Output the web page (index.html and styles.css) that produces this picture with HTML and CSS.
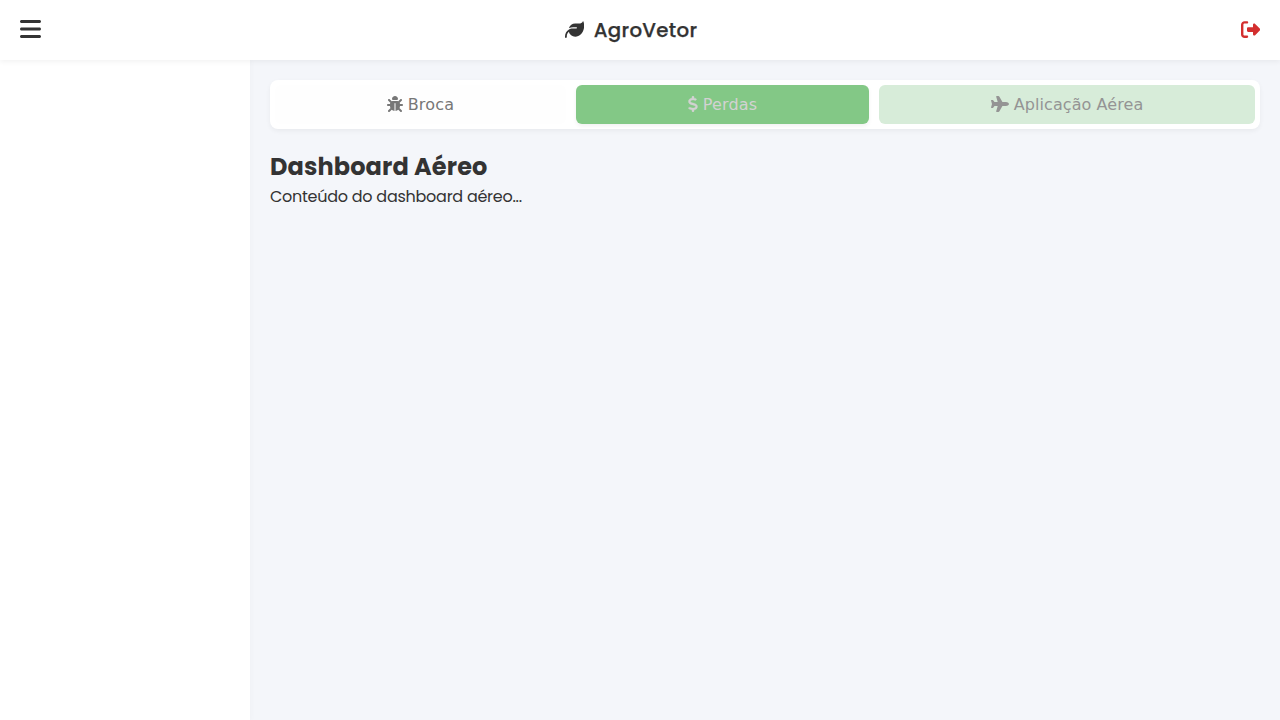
FILE: index.html
```html
<!DOCTYPE html>
<html lang="pt-BR">
<head>
<meta charset="utf-8">
<title>AgroVetor</title>
<link rel="stylesheet" href="styles.css">
</head>
<body>
<header class="header">
  <button class="icon-btn" aria-label="Menu"><svg class="bars" viewBox="0 0 448 512"><path d="M0 96C0 78.3 14.3 64 32 64H416c17.7 0 32 14.3 32 32s-14.3 32-32 32H32C14.3 128 0 113.7 0 96zM0 256c0-17.7 14.3-32 32-32H416c17.7 0 32 14.3 32 32s-14.3 32-32 32H32c-17.7 0-32-14.3-32-32zM448 416c0 17.7-14.3 32-32 32H32c-17.7 0-32-14.3-32-32s14.3-32 32-32H416c17.7 0 32 14.3 32 32z"/></svg></button>
  <div class="brand">
    <svg class="leaf" viewBox="0 0 512 512"><path d="M272 96c-78.6 0-145.1 51.5-167.7 122.5c33.6-17 71.5-26.5 111.7-26.5h88c8.8 0 16 7.2 16 16s-7.2 16-16 16H288 216c-16.6 0-32.7 1.9-48.2 5.4c-25.9 5.9-50 16.4-71.4 30.7C38.3 298.8 0 364.9 0 440v16c0 13.3 10.7 24 24 24s24-10.7 24-24V440c0-48.7 20.7-92.5 53.8-123.2C121.6 392.3 190.3 448 272 448l1 0c132.1-.7 239-130.9 239-291.4c0-42.6-7.5-83.1-21.1-119.6c-2.6-6.9-12.7-6.6-16.2-.1C455.9 72.1 418.7 96 376 96L272 96z"/></svg>
    <span class="brand-name">AgroVetor</span>
  </div>
  <button class="icon-btn logout" aria-label="Sair"><svg class="exit" viewBox="0 0 512 512"><path d="M377.9 105.9L500.7 228.7c7.2 7.2 11.3 17.1 11.3 27.3s-4.1 20.1-11.3 27.3L377.9 406.1c-6.4 6.4-15 9.9-24 9.9c-18.7 0-33.9-15.2-33.9-33.9l0-62.1-128 0c-17.7 0-32-14.3-32-32l0-64c0-17.7 14.3-32 32-32l128 0 0-62.1c0-18.7 15.2-33.9 33.9-33.9c9 0 17.6 3.6 24 9.9zM160 96L96 96c-17.7 0-32 14.3-32 32l0 256c0 17.7 14.3 32 32 32l64 0c17.7 0 32 14.3 32 32s-14.3 32-32 32l-64 0c-53 0-96-43-96-96L0 128C0 75 43 32 96 32l64 0c17.7 0 32 14.3 32 32s-14.3 32-32 32z"/></svg></button>
</header>
<div class="layout">
  <aside class="sidebar"></aside>
  <main class="content">
    <nav class="tabs">
      <button class="tab"><svg class="bug" viewBox="0 0 512 512"><path d="M256 0c53 0 96 43 96 96v3.6c0 15.7-12.7 28.4-28.4 28.4H188.4c-15.7 0-28.4-12.7-28.4-28.4V96c0-53 43-96 96-96zM41.4 105.4c12.5-12.5 32.8-12.5 45.3 0l64 64c.7 .7 1.3 1.4 1.9 2.1c14.2-7.3 30.4-11.4 47.5-11.4H312c17.1 0 33.2 4.1 47.5 11.4c.6-.7 1.2-1.4 1.9-2.1l64-64c12.5-12.5 32.8-12.5 45.3 0s12.5 32.8 0 45.3l-64 64c-.7 .7-1.4 1.3-2.1 1.9c6.2 12 10.1 25.3 11.1 39.5H480c17.7 0 32 14.3 32 32s-14.3 32-32 32H416c0 24.6-5.5 47.8-15.4 68.6c2.2 1.3 4.2 2.9 6 4.8l64 64c12.5 12.5 12.5 32.8 0 45.3s-32.8 12.5-45.3 0l-63.1-63.1c-24.5 21.8-55.8 36.2-90.3 39.6V240c0-8.8-7.2-16-16-16s-16 7.2-16 16V479.2c-34.5-3.4-65.8-17.8-90.3-39.6L86.6 502.6c-12.5 12.5-32.8 12.5-45.3 0s-12.5-32.8 0-45.3l64-64c1.9-1.9 3.9-3.4 6-4.8C101.5 367.8 96 344.6 96 320H32c-17.7 0-32-14.3-32-32s14.3-32 32-32H96.3c1.1-14.1 5-27.5 11.1-39.5c-.7-.6-1.4-1.2-2.1-1.9l-64-64c-12.5-12.5-12.5-32.8 0-45.3z"/></svg>Broca</button>
      <button class="tab tab-active"><svg class="dollar" viewBox="0 0 320 512"><path d="M160 0c17.7 0 32 14.3 32 32V67.7c1.6 .2 3.1 .4 4.7 .7c.4 .1 .7 .1 1.1 .2l48 8.8c17.4 3.2 28.9 19.9 25.7 37.2s-19.9 28.9-37.2 25.7l-47.5-8.7c-31.3-4.6-58.9-1.5-78.3 6.2s-27.2 18.3-29 28.1c-2 10.7-.5 16.7 1.2 20.4c1.8 3.9 5.5 8.3 12.8 13.2c16.3 10.7 41.3 17.7 73.7 26.3l2.9 .8c28.6 7.6 63.6 16.8 89.6 33.8c14.2 9.3 27.6 21.9 35.9 39.5c8.5 17.9 10.3 37.9 6.4 59.2c-6.9 38-33.1 63.4-65.6 76.7c-13.7 5.6-28.6 9.2-44.4 11V480c0 17.7-14.3 32-32 32s-32-14.3-32-32V445.1c-.4-.1-.9-.1-1.3-.2l-.2 0c-24.4-3.8-64.5-14.3-91.5-26.3c-16.1-7.2-23.4-26.1-16.2-42.2s26.1-23.4 42.2-16.2c20.9 9.3 55.3 18.5 75.2 21.6c31.9 4.7 58.2 2 76-5.3c16.9-6.9 24.6-16.9 26.8-28.9c1.9-10.6 .4-16.7-1.3-20.4c-1.9-4-5.6-8.4-13-13.3c-16.4-10.7-41.5-17.7-74-26.3l-2.8-.7C119.4 279.3 84.4 270 58.4 253c-14.2-9.3-27.5-22-35.8-39.6c-8.4-17.9-10.1-37.9-6.1-59.2C23.7 116 52.3 91.2 84.8 78.3c13.3-5.3 27.9-8.9 43.2-11V32c0-17.7 14.3-32 32-32z"/></svg>Perdas</button>
      <button class="tab tab-soft"><svg class="plane" viewBox="0 0 576 512"><path d="M482.3 192c34.2 0 93.7 29 93.7 64c0 36-59.5 64-93.7 64l-116.6 0L265.2 495.9c-5.7 10-16.3 16.1-27.8 16.1l-56.2 0c-10.6 0-18.3-10.2-15.4-20.4l49-171.6L112 320 68.8 377.6c-3 4-7.8 6.4-12.8 6.4l-42 0c-7.8 0-14-6.3-14-14c0-1.3 .2-2.6 .5-3.9L32 256 .5 145.9c-.4-1.3-.5-2.6-.5-3.9c0-7.8 6.3-14 14-14l42 0c5 0 9.8 2.4 12.8 6.4L112 192l102.9 0-49-171.6C162.9 10.2 170.6 0 181.2 0l56.2 0c11.5 0 22.1 6.2 27.8 16.1L365.7 192l116.6 0z"/></svg>Aplicação Aérea</button>
    </nav>
    <h2 class="title">Dashboard Aéreo</h2>
    <p class="text">Conteúdo do dashboard aéreo...</p>
  </main>
</div>
</body>
</html>
```
FILE: styles.css
```css
* { box-sizing: border-box; margin: 0; padding: 0; }
body {
  height: 100vh;
  display: flex;
  flex-direction: column;
  overflow: hidden;
  background: #f4f6fa;
  color: #333;
  font-family: Poppins, "Open Sans", sans-serif;
}
svg { display: block; fill: currentColor; flex: none; }
button { border: 0; background: none; color: inherit; font: inherit; }
.header {
  height: 60px;
  flex: none;
  display: flex;
  align-items: center;
  justify-content: space-between;
  padding: 0 20px;
  background: #fff;
  box-shadow: 0 2px 5px rgba(0, 0, 0, .05);
  z-index: 2;
}
.bars { width: 21px; height: 24px; margin-bottom: 2px; }
.exit { width: 19.2px; height: 19.2px; }
.logout { color: #d32f2f; }
.brand { display: flex; align-items: center; gap: 10px; margin-right: 20px; font-size: 19.8px; font-weight: 500; letter-spacing: .3px; -webkit-text-stroke: .25px; }
.leaf { width: 19.2px; height: 19.2px; }
.layout { flex: 1; display: flex; }
.sidebar { width: 250px; background: #fff; box-shadow: 2px 0 5px rgba(0, 0, 0, .02); }
.content { flex: 1; padding: 20px; }
.tabs {
  display: flex;
  gap: 10px;
  padding: 5px;
  margin-bottom: 20px;
  border-radius: 8px;
  background: #fff;
  box-shadow: 0 2px 5px rgba(0, 0, 0, .05);
}
.tab {
  flex: 1 1 auto;
  height: 39px;
  display: flex;
  align-items: center;
  justify-content: center;
  gap: 5px;
  border-radius: 6px;
  font: 16px "DejaVu Sans", sans-serif;
  letter-spacing: .2px;
  color: #777;
  background: #fefefe;
}
.tab-active { background: #83c886; color: #d2d2d2; box-shadow: 0 2px 4px rgba(0, 0, 0, .06); }
.tab-soft { background: #d7ecd9; color: #949494; letter-spacing: .07px; }
.bug, .dollar, .plane { height: 16px; margin-bottom: 1px; }
.plane { width: 18px; }
.bug { width: 16px; }
.dollar { width: 10px; stroke: currentColor; stroke-width: 12; }
.title { font-size: 24px; line-height: 36px; font-weight: 700; letter-spacing: .12px; }
.text { font-size: 16px; line-height: 24px; letter-spacing: -.26px; }
```
